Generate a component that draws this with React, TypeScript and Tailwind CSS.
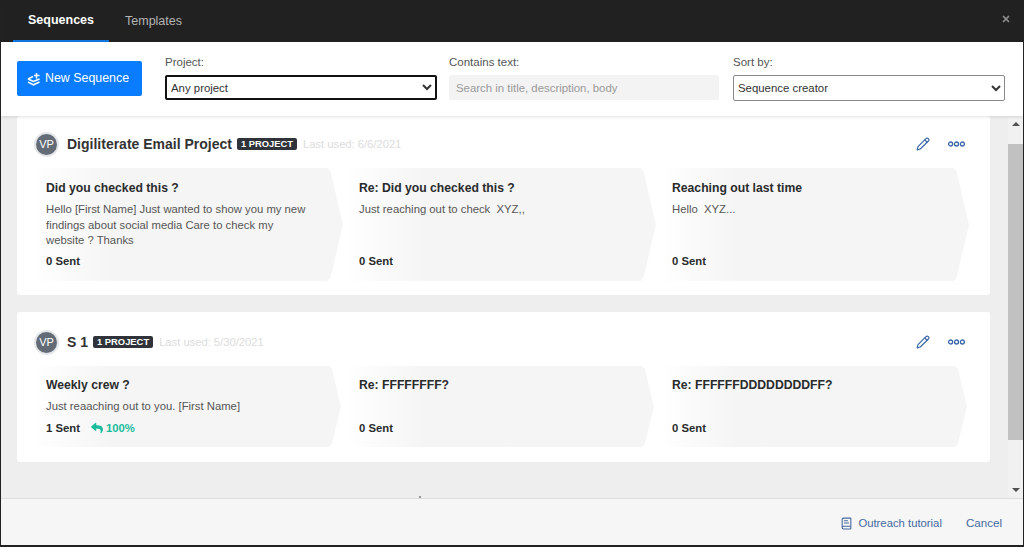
import React from "react";
import { Pencil, BookText, X } from "lucide-react";
import { FaReply } from "react-icons/fa";

interface Step {
  title: string;
  body?: string;
  sent: string;
  reply?: string;
}

interface Sequence {
  name: string;
  lastUsed: string;
  steps: Step[];
}

const tall: Sequence = {
  name: "Digiliterate Email Project",
  lastUsed: "Last used: 6/6/2021",
  steps: [
    {
      title: "Did you checked this ?",
      body: "Hello [First Name] Just wanted to show you my new findings about social media Care to check my website ? Thanks",
      sent: "0 Sent",
    },
    { title: "Re: Did you checked this ?", body: "Just reaching out to check  XYZ,,", sent: "0 Sent" },
    { title: "Reaching out last time", body: "Hello  XYZ...", sent: "0 Sent" },
  ],
};

const short: Sequence = {
  name: "S 1",
  lastUsed: "Last used: 5/30/2021",
  steps: [
    { title: "Weekly crew ?", body: "Just reaaching out to you. [First Name]", sent: "1 Sent", reply: "100%" },
    { title: "Re: FFFFFFFF?", sent: "0 Sent" },
    { title: "Re: FFFFFFDDDDDDDDFF?", sent: "0 Sent" },
  ],
};

function LayersPlus() {
  return (
    <svg width="14" height="14" viewBox="0 0 14 14" fill="none" stroke="white" strokeWidth="1.5">
      <path d="M1 7 L6 4.5 M1 7 L6.5 9.5 L12.5 7 M1 10 L6.5 12.8 L12.5 10" />
      <path d="M9.5 1 V6.5 M7 3.5 H12.5" />
    </svg>
  );
}

function StepCard({ step, isShort }: { step: Step; isShort: boolean }) {
  return (
    <div
      className={`flex flex-col bg-gradient-to-r from-white to-[#f5f5f5] to-[25%] pl-[13px] ${
        isShort
          ? "h-[81px] w-[308px] pt-[11px] pb-[12px] [clip-path:polygon(0_0,96%_0,97%_3%,100%_50%,97%_97%,96%_100%,0_100%)]"
          : "h-[113px] w-[310px] pt-[12px] pb-[13px] [clip-path:polygon(0_0,95%_0,96%_3%,100%_50%,96%_97%,95%_100%,0_100%)]"
      }`}
    >
      <div className="text-[12.2px] leading-[16px] font-bold text-[#292b2c]">{step.title}</div>
      {step.body && (
        <p className="mt-[6px] w-[265px] text-[11.3px] leading-[15.5px] whitespace-pre-wrap text-[#555]">{step.body}</p>
      )}
      <div className="mt-auto flex items-center text-[11.3px] leading-[14px] font-bold text-[#292b2c]">
        {step.sent}
        {step.reply && (
          <span className="ml-[11px] flex items-center gap-[3px] text-[#1abc9c]">
            <FaReply className="text-[12px]" />
            {step.reply}
          </span>
        )}
      </div>
    </div>
  );
}

function SequenceCard({ seq, isShort }: { seq: Sequence; isShort: boolean }) {
  return (
    <div className={`flex flex-col rounded-[3px] bg-white pr-[21px] pl-[16px] ${isShort ? "h-[150px] pt-[17px]" : "h-[179px] pt-[15px]"}`}>
      <div className="flex h-[26px] items-center">
        <div className="ml-[1px] flex h-[25px] w-[25px] items-center justify-center rounded-full border-[2px] border-[#e4e6e8] bg-[#636c76] text-[11px] text-white">
          VP
        </div>
        <span className="ml-[8px] text-[14px] font-bold text-[#333]">{seq.name}</span>
        <span className="ml-[5px] rounded-[2px] bg-[#30343a] px-[4px] text-[9.4px] leading-[12px] font-bold text-white">1 PROJECT</span>
        <span className="ml-[6px] text-[11.2px] text-[#dcdcdc]">{seq.lastUsed}</span>
        <Pencil className="mr-[18px] ml-auto text-[#3a66a8]" size={14} strokeWidth={2} />
        <svg width="17" height="6" viewBox="0 0 17 6" fill="none" stroke="#3a66a8" strokeWidth="1.3" className="mr-[4px]">
          <circle cx="2.6" cy="3" r="2" />
          <circle cx="8.5" cy="3" r="2" />
          <circle cx="14.4" cy="3" r="2" />
        </svg>
      </div>
      <div className="mt-[11px] flex gap-[3px]">
        {seq.steps.map((s) => (
          <div key={s.title} className="w-[310px]">
            <StepCard step={s} isShort={isShort} />
          </div>
        ))}
      </div>
    </div>
  );
}

export default function App() {
  return (
    <div className="flex h-[547px] w-[1024px] flex-col overflow-hidden border border-b-2 border-[#222] bg-white font-['Liberation_Sans',Arial,sans-serif]">
      {/* Tabs */}
      <div className="flex h-[41px] shrink-0 bg-[#212121] pl-[12px]">
        <div className="flex items-center border-b-2 border-[#1277e1] px-[15px] text-[12.5px] font-bold text-white">Sequences</div>
        <div className="flex items-center px-[16px] text-[12.5px] text-[#b5b5b5]">Templates</div>
        <X className="mt-[13px] mr-[12px] ml-auto text-[#8f8f8f]" size={10} strokeWidth={4} />
      </div>

      {/* Filters */}
      <div className="z-10 flex h-[74px] shrink-0 items-start bg-white pt-[13px] pl-[16px] shadow-[0_1px_3px_rgba(0,0,0,0.12)]">
        <button className="mt-[6px] flex h-[35px] w-[125px] items-center gap-[4px] rounded-[2px] bg-[#0a7cff] pl-[10px] text-[12.4px] text-white">
          <LayersPlus />
          New Sequence
        </button>
        <label className="ml-[23px] flex w-[272px] flex-col text-[11.5px] leading-[14px] text-[#555]">
          Project:
          <select className="mt-[6px] h-[25px] rounded-[2px] border-2 border-[#111] bg-white text-[11.4px] text-[#333] [padding-left:0px]">
            <option>Any project</option>
          </select>
        </label>
        <label className="ml-[12px] flex w-[270px] flex-col text-[11.5px] leading-[14px] text-[#555]">
          Contains text:
          <input
            readOnly
            placeholder="Search in title, description, body"
            className="mt-[6px] h-[25px] rounded-[2px] bg-[#f3f3f3] px-[7px] text-[11.4px] placeholder:text-[#999]"
          />
        </label>
        <label className="ml-[14px] flex w-[272px] flex-col text-[11.5px] leading-[14px] text-[#555]">
          Sort by:
          <select className="mt-[6px] h-[26px] rounded-[2px] border border-[#8a8a8a] bg-white text-[11.4px] text-[#333] [padding-left:0px]">
            <option>Sequence creator</option>
          </select>
        </label>
      </div>

      {/* List + scrollbar */}
      <div className="flex min-h-0 flex-1">
        <div className="flex flex-1 flex-col gap-[17px] overflow-hidden bg-[#eeeeee] pr-[18px] pl-[16px]">
          <SequenceCard seq={tall} isShort={false} />
          <SequenceCard seq={short} isShort={true} />
        </div>
        <div className="flex w-[15px] shrink-0 flex-col items-center bg-[#f1f1f1]">
          <div className="mt-[6px] h-0 w-0 border-x-[4px] border-b-[4px] border-x-transparent border-b-[#505050]" />
          <div className="mt-[18px] h-[296px] w-full bg-[#c1c1c1]" />
          <div className="mt-[48px] h-0 w-0 border-x-[4px] border-t-[4px] border-x-transparent border-t-[#505050]" />
        </div>
      </div>

      {/* Footer */}
      <div className="relative flex h-[47px] shrink-0 items-center justify-end gap-[24px] border-t border-[#ddd] bg-[#f6f6f6] pt-[2px] pr-[21px] text-[11.3px] text-[#45699f]">
        <div className="absolute top-[-3px] left-[418px] h-[2px] w-[2px] bg-[#999]" />
        <span className="flex items-center gap-[5px]">
          <BookText size={13} />
          Outreach tutorial
        </span>
        <span className="text-[11.6px]">Cancel</span>
      </div>
    </div>
  );
}
